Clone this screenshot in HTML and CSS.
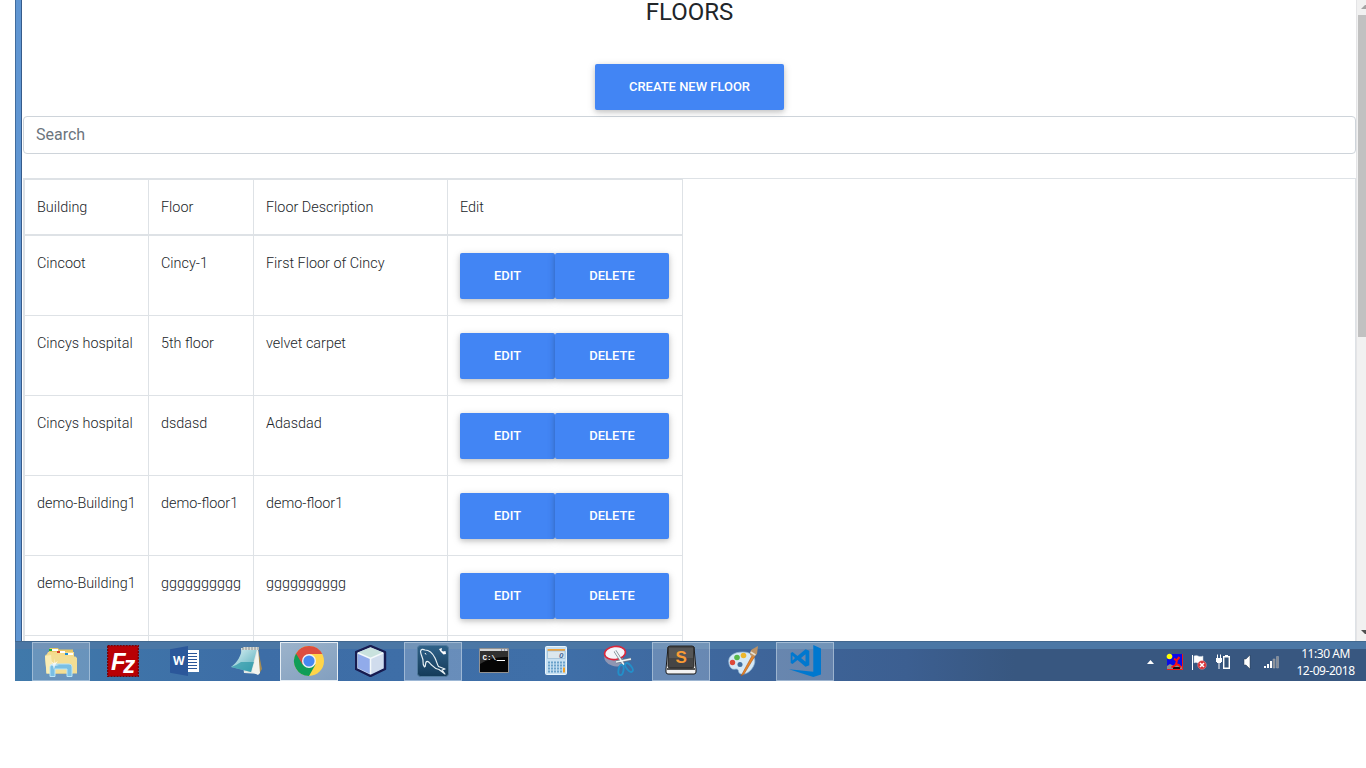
FILE: index.html
```html
<!DOCTYPE html>
<html lang="en">
<head>
<meta charset="utf-8">
<title>Floors</title>
<link rel="stylesheet" href="styles.css">
</head>
<body>
<div class="screen">
  <div class="window">
    <div class="frame-edge"></div>
    <main class="page">
      <h1 class="title">FLOORS</h1>
      <div class="create"><button class="btn">CREATE NEW FLOOR</button></div>
      <input class="search" type="text" placeholder="Search">
      <div class="table-wrap">
        <table class="floors">
          <colgroup><col class="c1"><col class="c2"><col class="c3"><col class="c4"></colgroup>
          <thead><tr><th>Building</th><th>Floor</th><th>Floor Description</th><th>Edit</th></tr></thead>
          <tbody>
            <tr><td>Cincoot</td><td>Cincy-1</td><td>First Floor of Cincy</td><td><div class="actions"><button class="btn edit">EDIT</button><button class="btn delete">DELETE</button></div></td></tr>
            <tr><td>Cincys hospital</td><td>5th floor</td><td>velvet carpet</td><td><div class="actions"><button class="btn edit">EDIT</button><button class="btn delete">DELETE</button></div></td></tr>
            <tr><td>Cincys hospital</td><td>dsdasd</td><td>Adasdad</td><td><div class="actions"><button class="btn edit">EDIT</button><button class="btn delete">DELETE</button></div></td></tr>
            <tr><td>demo-Building1</td><td>demo-floor1</td><td>demo-floor1</td><td><div class="actions"><button class="btn edit">EDIT</button><button class="btn delete">DELETE</button></div></td></tr>
            <tr><td>demo-Building1</td><td>gggggggggg</td><td>gggggggggg</td><td><div class="actions"><button class="btn edit">EDIT</button><button class="btn delete">DELETE</button></div></td></tr>
            <tr><td></td><td></td><td></td><td></td></tr>
          </tbody>
        </table>
      </div>
    </main>
    <div class="scrollbar">
      <svg class="sb-up" width="10" height="15" viewBox="0 0 10 15"><path d="M4 9h6V5H8z" fill="#a3a3a3"/></svg>
      <div class="thumb"></div>
      <svg class="sb-down" width="10" height="15" viewBox="0 0 10 15"><path d="M4 4h6v4H8z" fill="#505050"/></svg>
    </div>
  </div>
  <footer class="taskbar">
    <div class="apps">
      <div class="tile open"><svg class="icon" viewBox="0 0 32 32">
        <path d="M4 4.500l1-1.500h8l1 1.500h14v24H4z" fill="#e9c766"/><path d="M5 4h8v2H5z" fill="#fff"/><path d="M4 4h3v2H4z" fill="#1fae35"/>
        <path d="M2 9l1-2h26v20H2z" fill="#f5dc8c"/><path d="M12 6h8v2h-8z" fill="#fff"/><path d="M12 6h3v2h-3z" fill="#d54127"/><path d="M20 8h8v2h-8z" fill="#fff"/><path d="M20 8h3v2h-3z" fill="#1d8fd6"/>
        <path d="M0 11l1-1.500h15l2 2h12.500L32 13v15.500H1.500z" fill="#f3de94"/><path d="M0 11l1.500 17.500H8L6 10z" fill="#faedb5"/>
        <path d="M5 31.500V22q0-3 3-3h16q3 0 3 3v9.500h-5V24H10v7.500z" fill="#79bfe4" stroke="#b9e4f7"/><path d="M9 13l.7 5 3.300-2-2.500 3.500 3.500.5-4 .8-1 4-1-4-4-.8 4-.8-2-3 3 2z" fill="#fff" opacity=".8"/></svg></div>
      <div class="tile"><svg class="icon" viewBox="0 0 32 32"><path d="M.7.700h30.600v30.600H.7z" fill="#b90005" stroke="#750206" stroke-width="1.300" stroke-dasharray="2 1"/>
        <text x="4" y="25" class="fz">F<tspan class="small" dx="-2.500" dy="2.500">z</tspan></text></svg></div>
      <div class="tile"><svg class="icon" viewBox="0 0 32 32"><path d="M17 5h13v22H17z" fill="#fff"/><path d="M18 8.500h10M18 11.500h10M18 14.500h10M18 17.500h10M18 20.500h10M18 23.500h10" stroke="#2b579a" stroke-width="1"/><path d="M1 4.200L19 1v30L1 27.800z" fill="#2b579a"/><text x="4" y="20.300" class="word">W</text></svg></div>
      <div class="tile"><svg class="icon" viewBox="0 0 32 32">
        <path d="M27 4l4 20-3 5-4-2z" fill="#a58b52"/><path d="M10 3l17 1 1 25-15-1z" fill="#e3e8e5"/><path d="M27 4l2 24-2 2-6-3z" fill="#f3f4ee"/>
        <path d="M11 4h15L20 27 0 22C7 17 10 10 11 4z" fill="url(#note)"/><path d="M10 17h13l-3 10L0 22q6-2 10-5z" fill="#2393a5" opacity=".65"/><path d="M12 3.500h16" stroke="#d9dcd8" stroke-width="3"/><path d="M12 2v3m3-3v3m3-3v3m3-3v3m3-3v3m3-3v3" stroke="#777e7e" stroke-width=".8"/>
        <defs><linearGradient id="note" x2="1" y2="1"><stop stop-color="#e1f5f6"/><stop offset="1" stop-color="#4fa9b9"/></linearGradient></defs></svg></div>
      <div class="tile active"><svg class="icon" viewBox="0 0 32 32">
        <circle cx="16" cy="16" r="15" fill="#ffd54a"/><path d="M16 16L3 8.500A15 15 0 0 0 16 31l6.500-11.500z" fill="#109d58"/><path d="M16 9h13.300A15 15 0 0 0 3 8.500l6.500 11L16 16z" fill="#dc4d3f"/><circle cx="16" cy="16" r="7" fill="#f2f3f3"/><circle cx="16" cy="16" r="5.600" fill="#4688f1"/></svg></div>
      <div class="tile"><svg class="icon" viewBox="0 0 32 32"><path d="M15.500 1L30 7v17l-14.500 7L1 24V7z" fill="#c7d8ef" stroke="#171b50" stroke-width="2.400" stroke-linejoin="round"/><path d="M15.500 2.500L28 7.500 15.500 13 3 7.500z" fill="#c9e2de"/><path d="M3 8l12.500 5.500V29L3 23z" fill="#91abea"/><path d="M28 8l-12.500 5.500V29L28 23z" fill="#d0dced"/><path d="M3 8l12.500 5.500L28 8M15.500 14v15" fill="none" stroke="#f4f9fb" stroke-width="1.500"/></svg></div>
      <div class="tile open"><svg class="icon" viewBox="0 0 32 32"><rect x=".5" y=".5" width="31" height="31" rx="3" fill="url(#sea)" stroke="#507a9d"/>
        <path d="M9.500 16.500c-2 2 0 5-2 5.500-2-2-1.500-5-1.500-7C5 11 4 10 3.500 6.500 4 4 6 4 8 5c4 0 8 4 10 8 1.500 3 2 6 3.500 8.500L28 24l-3 1 3 4-6-4.500c-4-.5-6-3-8-5-1.500-2-3-4-4.500-3z" fill="none" stroke="#e8f1f5" stroke-width="1.200" stroke-linejoin="round"/><path d="M8 8l1 1.500" stroke="#fff"/><path d="M22 4l3-1-.5 2.500 1.500 1L28.500 6l.5 3-2.500.5-3-3z" fill="#fff"/>
        <defs><linearGradient id="sea" x2="0" y2="1"><stop stop-color="#2f6289"/><stop offset="1" stop-color="#143a59"/></linearGradient></defs></svg></div>
      <div class="tile"><svg class="icon" viewBox="0 0 32 32"><path d="M.5 3.500h29v24H.5z" fill="#050505" stroke="#929292"/><path d="M1 4h28v2H1z" fill="#d4d4d4"/><path d="M1 6h28v6Q13 11 1 19z" fill="#303030"/><path d="M22 5h1m2 0h1m2 0h1" stroke="#475784"/><text x="3.500" y="15" class="cmd">C:\_</text><path d="M18 15.500h8" stroke="#fff"/></svg></div>
      <div class="tile"><svg class="icon" viewBox="0 0 32 32"><rect x="4.500" y="1.500" width="21" height="28" rx="1" fill="#c7e0f2" stroke="#e9f4fb"/><path d="M6.500 4h17.500v2H6.500z" fill="#f0a23a"/><path d="M6.500 6h17.500v7.500H6.500z" fill="#dce7ed" stroke="#8db3d0" stroke-width=".6"/><text x="18" y="13" class="calc">0</text><path d="M7 17.500h15M7 20.500h15M7 23.500h15M7 26.500h15" stroke="#6aa1ca" stroke-width="2" stroke-dasharray="2 1"/><path d="M22 16.500h2v2h-2zM22 19.500h2v2h-2z" fill="#6aa1ca"/><path d="M22 22.500h2v5h-2z" fill="#f3a024"/></svg></div>
      <div class="tile"><svg class="icon" viewBox="0 0 32 32"><ellipse cx="11" cy="14.500" rx="10" ry="6.500" transform="rotate(20 11 14.500)" fill="#9d9eb6" opacity=".85"/><ellipse cx="12" cy="8" rx="10.500" ry="6.500" transform="rotate(-8 12 8)" fill="#f5f5fa" stroke="#d9293d" stroke-width="1.600"/><path d="M12 6l9 14M28 14l-15 3" stroke="#707d89" stroke-width="3"/><path d="M12 6l9 14M28 14l-15 3" stroke="#eef4f5" stroke-width="1.600"/><ellipse cx="18" cy="25" rx="2.500" ry="5.200" transform="rotate(10 18 25)" fill="none" stroke="#238fc9" stroke-width="1.900"/><ellipse cx="26" cy="22.500" rx="2.500" ry="5.200" transform="rotate(-38 26 22.500)" fill="none" stroke="#238fc9" stroke-width="1.900"/></svg></div>
      <div class="tile open"><svg class="icon" viewBox="0 0 32 32"><path d="M3 2h26l2 22v3q0 2-2 2H3q-2 0-2-2v-3z" fill="#f2f2f2" stroke="#161616"/><rect x="3" y="1" width="26" height="22" rx="2" fill="#454545" stroke="#252525"/><path d="M4 3h24v10H4z" fill="#565656"/><path d="M2 24h28" stroke="#222" stroke-width="1.500"/><text x="10.500" y="18" class="sublime">S</text></svg></div>
      <div class="tile"><svg class="icon" viewBox="0 0 32 32"><path d="M2 19C0 10 8 7 16 7c9 0 14 6 11 13-2 5-7 10-13 9-4-1-1-5-5-5-4 1-6-1-7-5z" fill="#d5e9f6" stroke="#8fb5d2" stroke-width=".7"/><circle cx="5.500" cy="17.500" r="2.700" fill="#dc493a"/><circle cx="10" cy="12.500" r="2.800" fill="#57b84a"/><circle cx="16.500" cy="10.500" r="2.800" fill="#edb72d"/><circle cx="13" cy="19.500" r="2.500" fill="#426f9e"/><path d="M26 9L14 31l3-2L28 11z" fill="#e98727" stroke="#aa561c" stroke-width=".6"/><path d="M24 5l7-4-1 8-3 3-4-2z" fill="#bc9265"/><path d="M23.500 7l5 3" stroke="#e8e2d4" stroke-width="1.500"/></svg></div>
      <div class="tile open"><svg class="icon" viewBox="0 0 32 32"><path d="M24.300 0L32 3.500v26L24.300 32 0 24.300l24.300 2.500z" fill="#0078cf"/><path d="M16.500 4.300l3.800 1.500v14.500l-3.800 1.500L8.500 15 3.500 19 1.700 18V8l1.800-1 5 4zM16.500 9.300L12 13l4.500 3.700zM3.500 10.500v5L6 13z" fill="#0078cf" fill-rule="evenodd"/></svg></div>
    </div>
    <div class="tray">
      <svg class="tray-icons" width="136" height="20" viewBox="1145 652 136 20">
        <path d="M1147 664l3.500-4 3.500 4z" fill="#fff"/>
        <path d="M1167 654h16v16h-16z" fill="#0b0be8"/><path d="M1167 666l3-2 4 2 3-2 6 3v3h-16z" fill="#8c8c8c"/><path d="M1173 667h7v2h-7z" fill="#111"/><circle cx="1169.500" cy="656.500" r="2.800" fill="#ff0"/><path d="M1174 658.500l2.500 2 3-3.500M1177 661l-1.500 4-4 2.500M1176 664l3 1 2 2.500" fill="none" stroke="#fb1010" stroke-width="2"/><path d="M1167 669.500h15.500V654" fill="none" stroke="#f01818"/>
        <path d="M1192.500 655v15" stroke="#fff"/><path d="M1194 656c4-2 4 2 9 0v7c-5 2-6-2-9 0z" fill="#fff" stroke="#c6d0dc" stroke-width=".5"/><circle cx="1202" cy="665" r="4.300" fill="#d92f35" stroke="#ef9a98" stroke-width=".5"/><path d="M1200 663l4 4m0-4l-4 4" stroke="#fff" stroke-width="1.500"/>
        <path d="M1217.500 654.500v4m3-4v4M1219 662v7" stroke="#fff"/><path d="M1216 658h6v4h-1v1h-4v-1h-1z" fill="#fff"/><path d="M1223.700 656.700h5.600v11.600h-5.600z" fill="#355377" stroke="#fff" stroke-width="1.400"/><path d="M1225 655h3v2h-3z" fill="#fff"/>
        <path d="M1244 659h2l4-4v14l-4-4h-2z" fill="#fff" stroke="#26384f" stroke-width=".5"/>
        <path d="M1264 666h2v2h-2zM1267 664h2v4h-2zM1270 661h2v7h-2z" fill="#fff"/><path d="M1273 659h2v9h-2zM1276.500 656.500h2v11.500h-2z" fill="#858b93" stroke="#a5adb6" stroke-width=".5"/>
      </svg>
      <div class="clock"><span>11:30 AM</span><span>12-09-2018</span></div>
    </div>
  </footer>
</div>
</body>
</html>
```

FILE: styles.css
```css
* { box-sizing: border-box; }
html, body { margin: 0; background: #fff; overflow: hidden; }
body { font-family: Roboto, "Liberation Sans", sans-serif; color: #212529; }
.screen { width: 1351px; height: 681px; margin-left: 15px; overflow: hidden; }
.window { display: flex; height: 641px; }
.frame-edge { flex: 0 0 7px; background: #6096d2; border-left: 1px solid #416c9d; border-right: 1px solid #365b8b; }
.page { flex: 0 0 1334px; padding-left: 1px; background: #fff; height: 641px; }
.title { margin: 0; height: 64px; text-align: center; font-size: 24px; line-height: 24px; font-weight: 400; }
.create { height: 52px; display: flex; justify-content: center; }
.btn { height: 46px; border: 0; border-radius: 2px; padding: 0 34.24px; font: 500 12.96px/44px Roboto, "Liberation Sans", sans-serif; color: #fff; background: #4285f4; box-shadow: 0 2px 5px 0 rgba(0,0,0,.16), 0 2px 10px 0 rgba(0,0,0,.12); white-space: nowrap; }
.edit { width: 95px; padding: 0; }
.delete { width: 114px; padding: 0; }
.search { display: block; width: 1333px; height: 38px; border: 1px solid #ced4da; border-radius: 4px; padding: 0 12px 2px; font: 400 16px/24px Roboto, "Liberation Sans", sans-serif; color: #495057; background: #fff; }
.search::placeholder { color: #6c757d; opacity: 1; }
.table-wrap { margin-top: 24px; width: 1333px; height: 463px; overflow: hidden; border: 1px solid #dee2e6; border-bottom: 0; }
.floors { width: 659px; table-layout: fixed; border-collapse: separate; border-spacing: 0; border-top: 1px solid #dee2e6; border-left: 1px solid #dee2e6; font-size: 14.4px; font-weight: 300; line-height: 21.6px; }
.c1 { width: 124px; } .c2 { width: 105px; } .c3 { width: 194px; } .c4 { width: 235px; }
.floors th, .floors td { padding: 17px 12px 0; border-right: 1px solid #dee2e6; border-bottom: 1px solid #dee2e6; text-align: left; vertical-align: top; font-weight: 300; white-space: nowrap; }
.floors th { height: 56px; border-bottom-width: 2px; }
.floors td { height: 80px; }
.actions { display: flex; }
.scrollbar { flex: 1; display: flex; flex-direction: column; background: #f1f1f1; border-left: 1px solid #e4e4e6; }
.thumb { margin-left: 1px; height: 322px; background: #c1c1c1; }
.sb-up, .sb-down { flex: none; }
.sb-down { margin-top: auto; }
.taskbar { height: 40px; display: flex; justify-content: space-between; padding-left: 17px; background: linear-gradient(180deg, #4b77a5 0 7px, transparent 7px), linear-gradient(90deg, #4079aa 0, #3d6da6 18%, #3f6fa8 40%, #3e659a 55%, #3c5f91 66%, #385780 74%, #385780 100%); border-top: 1px solid #42688f; }
.apps { display: flex; gap: 4px; }
.tile { width: 58px; height: 39px; padding: 3px 0 0 13px; }
.tile.open { background: rgba(255,255,255,.22); border: 1px solid rgba(210,225,240,.5); padding: 2px 0 0 12px; }
.tile.active { background: linear-gradient(150deg, #9cb3cb, #829fbf); border: 1px solid #e5edf4; padding: 2px 0 0 12px; }
.icon { display: block; width: 32px; height: 32px; }
.fz { font: italic 700 24px "Liberation Sans", sans-serif; fill: #fff; }
.small { font-size: 24px; }
.word { font: 700 12px "Open Sans", sans-serif; fill: #fff; }
.cmd { font: 700 7.500px "Liberation Mono", monospace; fill: #fff; }
.calc { font: italic 700 8px "Liberation Sans", sans-serif; fill: #496a9b; }
.sublime { font: 700 17px "Liberation Sans", sans-serif; fill: #f99b35; }
.tray { display: flex; color: #fff; }
.tray-icons { margin-top: 10px; }
.clock { width: 79px; margin: 0 1px 0 5px; padding-top: 3px; display: flex; flex-direction: column; align-items: center; font: 400 12px/17px "Noto Sans", sans-serif; letter-spacing: -.45px; }
```
